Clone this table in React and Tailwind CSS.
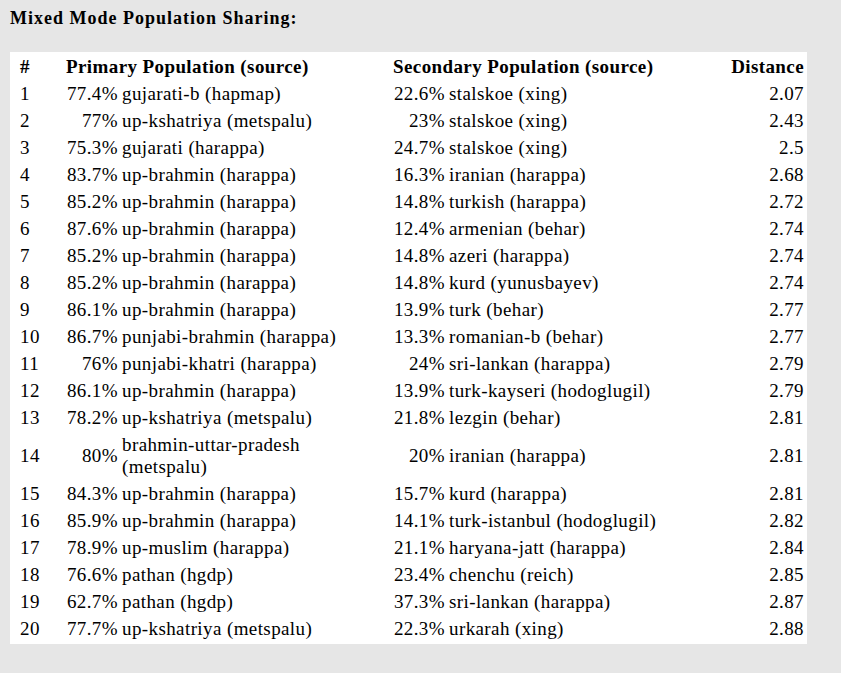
const rows = [
  [1, '77.4%', 'gujarati-b (hapmap)', '22.6%', 'stalskoe (xing)', '2.07'],
  [2, '77%', 'up-kshatriya (metspalu)', '23%', 'stalskoe (xing)', '2.43'],
  [3, '75.3%', 'gujarati (harappa)', '24.7%', 'stalskoe (xing)', '2.5'],
  [4, '83.7%', 'up-brahmin (harappa)', '16.3%', 'iranian (harappa)', '2.68'],
  [5, '85.2%', 'up-brahmin (harappa)', '14.8%', 'turkish (harappa)', '2.72'],
  [6, '87.6%', 'up-brahmin (harappa)', '12.4%', 'armenian (behar)', '2.74'],
  [7, '85.2%', 'up-brahmin (harappa)', '14.8%', 'azeri (harappa)', '2.74'],
  [8, '85.2%', 'up-brahmin (harappa)', '14.8%', 'kurd (yunusbayev)', '2.74'],
  [9, '86.1%', 'up-brahmin (harappa)', '13.9%', 'turk (behar)', '2.77'],
  [10, '86.7%', 'punjabi-brahmin (harappa)', '13.3%', 'romanian-b (behar)', '2.77'],
  [11, '76%', 'punjabi-khatri (harappa)', '24%', 'sri-lankan (harappa)', '2.79'],
  [12, '86.1%', 'up-brahmin (harappa)', '13.9%', 'turk-kayseri (hodoglugil)', '2.79'],
  [13, '78.2%', 'up-kshatriya (metspalu)', '21.8%', 'lezgin (behar)', '2.81'],
  [14, '80%', 'brahmin-uttar-pradesh (metspalu)', '20%', 'iranian (harappa)', '2.81'],
  [15, '84.3%', 'up-brahmin (harappa)', '15.7%', 'kurd (harappa)', '2.81'],
  [16, '85.9%', 'up-brahmin (harappa)', '14.1%', 'turk-istanbul (hodoglugil)', '2.82'],
  [17, '78.9%', 'up-muslim (harappa)', '21.1%', 'haryana-jatt (harappa)', '2.84'],
  [18, '76.6%', 'pathan (hgdp)', '23.4%', 'chenchu (reich)', '2.85'],
  [19, '62.7%', 'pathan (hgdp)', '37.3%', 'sri-lankan (harappa)', '2.87'],
  [20, '77.7%', 'up-kshatriya (metspalu)', '22.3%', 'urkarah (xing)', '2.88'],
];

const cell = 'py-[2.5px] leading-[22px] font-normal';
const head = 'py-[2.5px] leading-[22px] font-bold';

export default function App() {
  return (
    <div className="min-h-screen bg-[#e6e6e6] text-black pl-[10px] pt-[6px] font-['Liberation_Serif','Times_New_Roman',serif]">
      <h2 className="text-[18px] font-bold leading-[24px] tracking-[1px]">Mixed Mode Population Sharing:</h2>
      <div className="mt-[22px] w-[797px] bg-white pt-[1px] pb-[2px]">
        <table className="table-fixed w-full border-collapse text-[19px] tracking-[0.4px]">
          <colgroup>
            <col className="w-[54px]" />
            <col className="w-[56px]" />
            <col className="w-[271px]" />
            <col className="w-[56px]" />
            <col className="w-[260px]" />
            <col />
          </colgroup>
          <thead>
            <tr>
              <th className={`${head} text-left pl-[10px]`}>#</th>
              <th colSpan={2} className={`${head} text-left pl-[2px]`}>Primary Population (source)</th>
              <th colSpan={2} className={`${head} text-left pl-[2px]`}>Secondary Population (source)</th>
              <th className={`${head} text-right pr-[3px]`}>Distance</th>
            </tr>
          </thead>
          <tbody>
            {rows.map((r) => (
              <tr key={r[0]}>
                <td className={`${cell} pl-[10px]`}>{r[0]}</td>
                <td className={`${cell} text-right pr-[2px]`}>{r[1]}</td>
                <td className={`${cell} pl-[2px] pr-[12px]`}>{r[2]}</td>
                <td className={`${cell} text-right pr-[2px]`}>{r[3]}</td>
                <td className={`${cell} pl-[2px]`}>{r[4]}</td>
                <td className={`${cell} text-right pr-[3px]`}>{r[5]}</td>
              </tr>
            ))}
          </tbody>
        </table>
      </div>
    </div>
  );
}
